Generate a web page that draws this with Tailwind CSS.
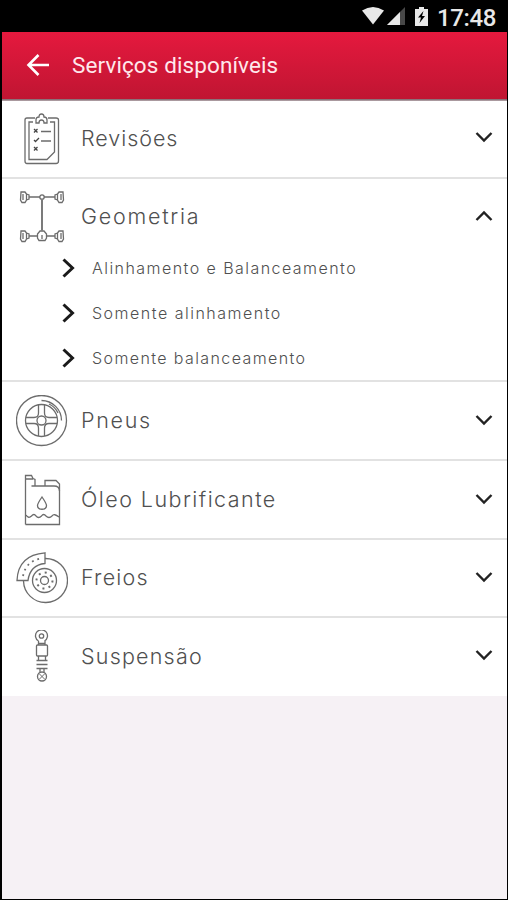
<!DOCTYPE html>
<html lang="pt-BR">
  <head>
    <meta charset="UTF-8" />
    <meta name="viewport" content="width=device-width, initial-scale=1.0" />
    <script src="https://cdn.jsdelivr.net/npm/@tailwindcss/browser@4"></script>
    <title>Serviços disponíveis</title>
  </head>
  <body class="h-screen overflow-hidden flex flex-col bg-[#f6f1f5] border-l-2 border-r border-b border-black font-[Inter,sans-serif] font-light text-[#505050]">
    <!-- status bar -->
    <div class="h-8 shrink-0 bg-black flex items-center justify-end pr-[11px] text-[#e8e8e8]">
      <svg class="w-[22px] h-[18px]" viewBox="0 0 22 18" fill="currentColor"><path d="M0 3.500Q11-3.500 22 3.500L11 17.500Z" /></svg>
      <svg class="w-[18px] h-[18px] ml-[3px]" viewBox="0 0 18 18"><path d="M18 0V18H0Z" fill="#484848" /><path d="M13 5V18H0Z" fill="currentColor" /></svg>
      <svg class="w-[13px] h-[19px] ml-[10px]" viewBox="0 0 13 19"><path d="M0 2H4V0H9V2H13V19H0Z" fill="currentColor" /><path d="M8.500 4L3 10.500H6L4.500 16L10 9H7Z" fill="#000" /></svg>
      <span class="ml-[9px] pt-1 font-[Roboto,sans-serif] font-medium text-[24px] leading-8 tracking-[-0.4px]">17:48</span>
    </div>
    <!-- header -->
    <header class="h-[67px] shrink-0 flex items-center pb-0.5 pl-6 bg-linear-to-b from-[#e5193e] to-[#c01532] text-[#ffe8ec]">
      <svg class="w-[23px] h-[22px]" viewBox="0 0 23 22" fill="none" stroke="#fff" stroke-width="2.600"><path d="M12.500 1L2.500 11L12.500 21M2.500 11H23" /></svg>
      <h1 class="ml-[23px] font-[Roboto,sans-serif] font-normal text-[22.5px] leading-8 tracking-[0.1px]">Serviços disponíveis</h1>
    </header>
    <div class="h-0.5 shrink-0 bg-linear-to-b from-[#7b6068] to-[#b9adb1]"></div>

    <main class="bg-white text-[21.5px]">
      <!-- revisões -->
      <div class="h-[78px] flex items-center pl-3.5 pr-3.5 border-b-2 border-[#e2e2e2]">
        <svg class="w-[52px] h-[52px]" viewBox="0 0 52 52" fill="none" stroke="#6c6c6c" stroke-width="1.300">
          <path d="M19 5H11Q9 5 9 7V48Q9 50.500 11 50.500H40Q42.500 50.500 42.500 48V7Q42.500 5 40 5H32" />
          <path d="M17 9H13V46.500H31L38.500 39V9H34" />
          <path d="M20 10V7Q20 4 23 4Q23 1 25.500 1Q28 1 28 4Q31 4 31 7V10H28Q28 7 25.500 7Q23 7 23 10Z" />
          <path d="M18 16L21.500 19.500M21.500 16L18 19.500M18 27L19.500 28.500L23 25M18 34L21.500 37.500M21.500 34L18 37.500" stroke="#444" />
          <path d="M25 18.500H35M25 28H35" />
        </svg>
        <span class="ml-[13px] pb-0.5 grow tracking-[0.95px]">Revisões</span>
        <svg class="w-[18px] h-3 mb-1" viewBox="0 0 18 12" fill="none" stroke="#222" stroke-width="2.400"><path d="M1.500 2L9 9.500L16.500 2" /></svg>
      </div>

      <!-- geometria -->
      <section class="border-b-2 border-[#e2e2e2]">
        <div class="h-[66px] pt-2 flex items-center pl-3.5 pr-3.5">
          <svg class="w-[52px] h-[52px] overflow-visible" viewBox="0 0 52 52" fill="none" stroke="#6c6c6c" stroke-width="1.300">
            <path d="M5 2H9L10.500 4V10L9 12.500H6L4.500 10ZM10.500 4L13 5V9L10.500 10M13 7H24M7 4V10" />
            <path d="M47 2H43L41.500 4V10L43 12.500H46L47.500 10ZM41.500 4L39 5V9L41.500 10M39 7H28M45 4V10" />
            <path d="M5 41H9L10.500 43V49L9 51.500H6L4.500 49ZM10.500 43L13 44V48L10.500 49M13 46H22M7 43V49" />
            <path d="M47 41H43L41.500 43V49L43 51.500H46L47.500 49ZM41.500 43L39 44V48L41.500 49M39 46H30M45 43V49" />
            <circle cx="26" cy="7" r="2.200" />
            <path d="M26 9.500V40.500" stroke-width="1.800" />
            <path d="M24 41H28L30.500 44V48L29 50.500H23L21.500 48V44ZM26 45V49" />
          </svg>
          <span class="ml-[13px] grow tracking-[1.75px]">Geometria</span>
          <svg class="w-[18px] h-3" viewBox="0 0 18 12" fill="none" stroke="#222" stroke-width="2.400"><path d="M1.500 10L9 2.500L16.500 10" /></svg>
        </div>
        <ul class="pl-[60px] text-[16px]">
          <li class="h-[45px] flex items-center">
            <svg class="w-3.5 h-5" viewBox="0 0 14 20" fill="none" stroke="#1a1a1a" stroke-width="3"><path d="M1.500 1.500L10.500 10L1.500 18.500" /></svg>
            <span class="ml-4 tracking-[1.45px]">Alinhamento e Balanceamento</span>
          </li>
          <li class="h-[45px] flex items-center">
            <svg class="w-3.5 h-5" viewBox="0 0 14 20" fill="none" stroke="#1a1a1a" stroke-width="3"><path d="M1.500 1.500L10.500 10L1.500 18.500" /></svg>
            <span class="ml-4 tracking-[1.5px]">Somente alinhamento</span>
          </li>
          <li class="h-[45px] flex items-center">
            <svg class="w-3.5 h-5" viewBox="0 0 14 20" fill="none" stroke="#1a1a1a" stroke-width="3"><path d="M1.500 1.500L10.500 10L1.500 18.500" /></svg>
            <span class="ml-4 tracking-[1.4px]">Somente balanceamento</span>
          </li>
        </ul>
      </section>

      <!-- pneus -->
      <div class="h-[79px] flex items-center pl-3.5 pr-3.5 border-b-2 border-[#e2e2e2]">
        <svg class="w-[52px] h-[52px]" viewBox="0 0 52 52" fill="none" stroke="#6c6c6c" stroke-width="1.300">
          <circle cx="25.500" cy="25.500" r="25" />
          <circle cx="25.500" cy="25.500" r="16" />
          <circle cx="25.500" cy="25.500" r="4.500" />
          <path d="M22.500 10V18Q22.500 22.500 18 22.500H10M28.500 10V18Q28.500 22.500 33 22.500H41M22.500 41V33Q22.500 28.500 18 28.500H10M28.500 41V33Q28.500 28.500 33 28.500H41" />
          <path d="M25.500 5.500A20 20 0 0 1 45.500 25.500M33 9A18 18 0 0 1 42 18" />
        </svg>
        <span class="ml-[13px] pb-px grow tracking-[1.7px]">Pneus</span>
        <svg class="w-[18px] h-3 mb-0.5" viewBox="0 0 18 12" fill="none" stroke="#222" stroke-width="2.400"><path d="M1.500 2L9 9.500L16.500 2" /></svg>
      </div>

      <!-- óleo lubrificante -->
      <div class="h-[79px] flex items-center pl-3.5 pr-3.5 border-b-2 border-[#e2e2e2]">
        <svg class="w-[52px] h-[52px]" viewBox="0 0 52 52" fill="none" stroke="#6c6c6c" stroke-width="1.300">
          <path d="M9.500 50.500V1.500H15.500L17 4.500L19 5.500V12M9.500 5H17" />
          <path d="M15.500 12H38Q43.500 12 43.500 17V50.500H9.500" />
          <path d="M29 12V6.500H40L43.500 10V17" />
          <path d="M26 23Q21.500 29.500 21.500 31.500C21.500 36.500 30.500 36.500 30.500 31.500Q30.500 29.500 26 23Z" />
          <path d="M10 41Q12.500 45 15.500 42Q18 39 20 42Q22.500 45 25.500 42Q27.500 39 30 42Q33 45 36 42Q38 39 43 43" />
        </svg>
        <span class="ml-[13px] pb-px grow tracking-[1.45px]">Óleo Lubrificante</span>
        <svg class="w-[18px] h-3 mb-0.5" viewBox="0 0 18 12" fill="none" stroke="#222" stroke-width="2.400"><path d="M1.500 2L9 9.500L16.500 2" /></svg>
      </div>

      <!-- freios -->
      <div class="h-[78px] flex items-center pl-3.5 pr-3.5 border-b-2 border-[#e2e2e2]">
        <svg class="w-[52px] h-[52px]" viewBox="0 0 52 52" fill="none" stroke="#6c6c6c" stroke-width="1.300">
          <path d="M29 .8V11.500Q14 13 12 28.500H1Q2 3 29 .8Z" />
          <path d="M29 6.500A22 22 0 1 1 7.500 29" />
          <circle cx="28.500" cy="28.500" r="12" />
          <circle cx="28.500" cy="28.500" r="4" />
          <circle cx="28.500" cy="28.500" r="8" stroke-width="2" stroke-dasharray="2 4.280" />
          <path d="M7 24Q10 9 25 6.500" stroke-width="1.800" stroke-dasharray="1.800 4" />
        </svg>
        <span class="ml-[13px] pb-0.5 grow tracking-[1.2px]">Freios</span>
        <svg class="w-[18px] h-3 mb-0.5" viewBox="0 0 18 12" fill="none" stroke="#222" stroke-width="2.400"><path d="M1.500 2L9 9.500L16.500 2" /></svg>
      </div>

      <!-- suspensão -->
      <div class="h-[78px] pb-0.5 flex items-center pl-3.5 pr-3.5">
        <svg class="w-[52px] h-[52px]" viewBox="0 0 52 52" fill="none" stroke="#6c6c6c" stroke-width="1.300">
          <path d="M22.500 11A6 6 0 1 1 28.500 11M22.500 11V15M29 11V15M23 13.500H29" />
          <circle cx="25.500" cy="6" r="2.200" />
          <rect x="20.500" y="15" width="11" height="11" rx="1" />
          <path d="M22.500 26V30M29.500 26V30M20.500 30.500H31.500M20.500 34.500H31.500M20.500 38.500H31.500M24 39V42M28 39V42" />
          <circle cx="26" cy="46.500" r="4.500" />
          <path d="M23 43.500L29 49.500M29 43.500L23 49.500" stroke-width="1" />
        </svg>
        <span class="ml-[13px] grow tracking-[1.2px]">Suspensão</span>
        <svg class="w-[18px] h-3 mb-0.5" viewBox="0 0 18 12" fill="none" stroke="#222" stroke-width="2.400"><path d="M1.500 2L9 9.500L16.500 2" /></svg>
      </div>
    </main>
  </body>
</html>
